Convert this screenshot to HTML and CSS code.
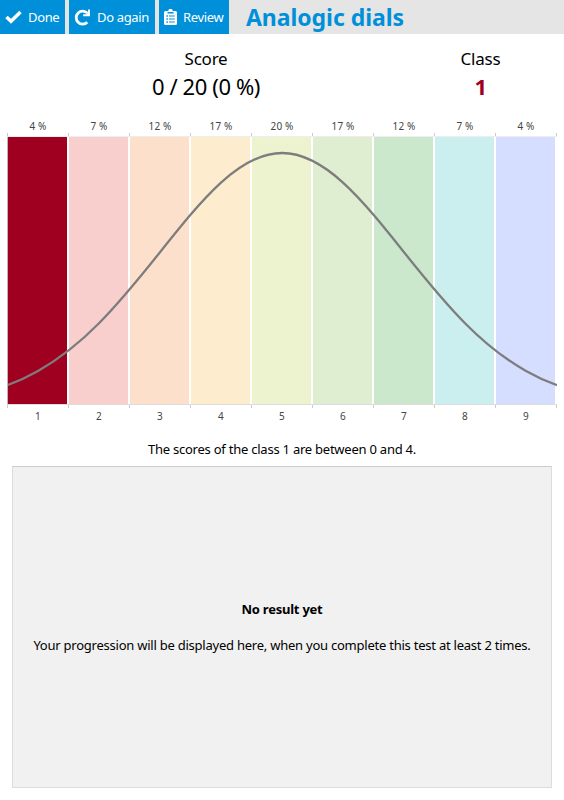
FILE: index.html
```html
<!DOCTYPE html>
<html lang="en">
<head>
<meta charset="utf-8">
<title>Analogic dials</title>
<link rel="stylesheet" href="styles.css">
</head>
<body>
<header class="toolbar">
  <button class="btn done"><svg width="17" height="14" viewBox="0 0 17 14"><path d="M1.5 7 6 11.3 15.5 2" fill="none" stroke="#fff" stroke-width="3.5"/></svg>Done</button>
  <button class="btn again"><svg width="17" height="17" viewBox="0 0 17 17"><path d="M13.3 13.2A6.5 6.5 0 1 1 13.4 4.1" fill="none" stroke="#fff" stroke-width="2.8"/><path d="M16 0.5V7.3H9.2V5.3L12.5 5.2 13.9 3.4 14.1 .5Z" fill="#fff"/></svg>Do again</button>
  <button class="btn review"><svg width="13" height="16" viewBox="0 0 13 16"><path fill="#fff" fill-rule="evenodd" d="M1.5 2H4.3A2.2 2.2 0 0 1 8.7 2H11.5Q13 2 13 3.5V14.5Q13 16 11.5 16H1.5Q0 16 0 14.5V3.5Q0 2 1.5 2ZM3.5 3V4.5H9.5V3ZM2.4 6.3V7.8H3.9V6.3ZM5 6.5V7.5H10.7V6.5ZM2.4 9.3V10.8H3.9V9.3ZM5 9.5V10.5H10.7V9.5ZM2.4 12.3V13.8H3.9V12.3ZM5 12.5V13.5H10.7V12.5Z"/></svg>Review</button>
  <h1>Analogic dials</h1>
</header>
<section class="summary">
  <div class="score"><div class="label">Score</div><div class="value">0 / 20 (0 %)</div></div>
  <div class="class"><div class="label">Class</div><div class="value grade">1</div></div>
</section>
<section class="chart">
  <div class="labels top"><span>4 %</span><span>7 %</span><span>12 %</span><span>17 %</span><span>20 %</span><span>17 %</span><span>12 %</span><span>7 %</span><span>4 %</span></div>
  <div class="ticks"></div>
  <div class="plot">
    <i class="c1"></i><i class="c2"></i><i class="c3"></i><i class="c4"></i><i class="c5"></i><i class="c6"></i><i class="c7"></i><i class="c8"></i><i class="c9"></i>
    <svg class="curve" width="549" height="268" viewBox="0 0 549 268"><path d="M0 247.9C10 244.2 20 239.6 30 233.9C50.3 222.5 70.7 206.7 91 186.2C111.3 165.7 131.7 140.7 152 115.2C172.3 89.7 192.7 64.1 213 45.6C233.3 27.1 253.7 16 274 16C294.3 16 314.7 27.1 335 45.6C355.3 64.1 375.7 89.7 396 115.2C416.3 140.7 436.7 165.7 457 186.2C477.3 206.7 497.7 222.5 518 233.9C528 239.6 538 244.2 549 248.1" fill="none" stroke="#7d7d7d" stroke-width="2.3"/></svg>
  </div>
  <div class="ticks lower"></div>
  <div class="labels bottom"><span>1</span><span>2</span><span>3</span><span>4</span><span>5</span><span>6</span><span>7</span><span>8</span><span>9</span></div>
</section>
<p class="range">The scores of the class 1 are between 0 and 4.</p>
<section class="progress">
  <strong>No result yet</strong>
  <p>Your progression will be displayed here, when you complete this test at least 2 times.</p>
</section>
</body>
</html>
```
FILE: styles.css
```css
* { box-sizing: border-box; }
body { margin: 0; height: 800px; overflow: hidden; background: #fff; color: #000; font: 13px/18px "Noto Sans", sans-serif; letter-spacing: -0.235px; }
.toolbar { display: flex; height: 34px; background: #e5e5e5; }
.btn { display: flex; align-items: center; gap: 6px; height: 34px; margin: 0 4px 0 0; padding: 0 0 0 5px; border: 0; background: #0090da; color: #fff; font: 13px/18px "Noto Sans", sans-serif; letter-spacing: -0.35px; white-space: nowrap; }
.btn svg { flex: none; }
.done { width: 65px; }
.again { width: 86px; }
.review { width: 70px; margin-right: 0; }
h1 { margin: 0 0 0 17px; color: #0090da; font-size: 23px; line-height: 34px; font-weight: 700; letter-spacing: -0.05px; }
.summary { display: flex; height: 84px; padding-top: 13px; text-align: center; }
.score { width: 412px; }
.class { width: 137px; }
.label { font-size: 17px; line-height: 23px; }
.value { margin-top: 2px; font-size: 22px; line-height: 28px; letter-spacing: -0.4px; }
.grade { color: #a00020; font-weight: 700; }
.chart { width: 549px; margin-left: 8px; color: #444; }
.labels { display: grid; grid-template-columns: repeat(9, 61px); text-align: center; font-size: 10px; line-height: 16px; letter-spacing: 0.15px; }
.labels span { padding-right: 1px; }
.top { height: 15px; }
.ticks { width: 550px; height: 4px; margin-left: -1px; background: repeating-linear-gradient(90deg, #ccc 0 1px, transparent 1px 61px); border-bottom: 1px solid #eee; }
.plot { position: relative; display: grid; grid-template-columns: repeat(9, 60px); column-gap: 1px; width: 550px; height: 267px; margin-left: -1px; border-left: 1px solid #c8b0b6; }
.plot i { border-right: 1px solid #fff; }
.c1 { background: #a00020; }
.c2 { background: #f8cfcc; }
.c3 { background: #fde0cb; }
.c4 { background: #fdecce; }
.c5 { background: #edf3ce; }
.c6 { background: #dfedd1; }
.c7 { background: #cbe7cc; }
.c8 { background: #cbeeee; }
.c9 { background: #d6deff; }
.curve { position: absolute; top: 0; left: 0; }
.lower { border-top: 1px solid #ddd; border-bottom: 0; }
.bottom { height: 17px; }
.range { margin: 15px 0 8px; text-align: center; }
.progress { display: flex; flex-direction: column; align-items: center; width: 540px; height: 322px; margin-left: 12px; padding-top: 133px; border: 1px solid #ddd; border-top-color: #ccc; background: #f1f1f1; }
.progress p { margin: 18px 0 0; white-space: nowrap; }
```
